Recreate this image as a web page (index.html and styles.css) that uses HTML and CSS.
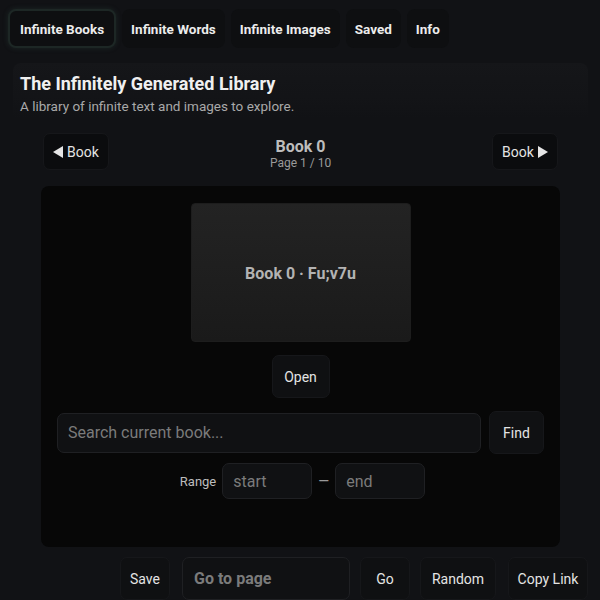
FILE: index.html
```html
<!DOCTYPE html>
<html lang="en">
<head>
<meta charset="utf-8">
<title>The Infinitely Generated Library</title>
<link rel="stylesheet" href="styles.css">
</head>
<body>
  <nav class="tabs">
    <button class="tab active">Infinite Books</button>
    <button class="tab">Infinite Words</button>
    <button class="tab">Infinite Images</button>
    <button class="tab">Saved</button>
    <button class="tab">Info</button>
  </nav>

  <main class="library">
    <header class="intro">
      <h1 class="title">The Infinitely Generated Library</h1>
      <p class="subtitle">A library of infinite text and images to explore.</p>
    </header>

    <section class="reader">
      <div class="book-nav">
        <button class="btn nav-btn">
          <svg class="tri" viewBox="0 0 10 12" width="10" height="12"><path d="M10 0 L10 12 L0 6 Z" fill="#e6e6e6"/></svg>
          Book
        </button>
        <div class="book-id">
          <div class="book-name">Book 0</div>
          <div class="book-page">Page 1 / 10</div>
        </div>
        <button class="btn nav-btn">
          Book
          <svg class="tri" viewBox="0 0 10 12" width="10" height="12"><path d="M0 0 L0 12 L10 6 Z" fill="#e6e6e6"/></svg>
        </button>
      </div>

      <div class="shelf">
        <div class="cover">Book 0 · Fu;v7u</div>
        <button class="btn open-btn">Open</button>

        <div class="search-row">
          <input class="field search" type="text" placeholder="Search current book...">
          <button class="btn find-btn">Find</button>
        </div>

        <div class="range-row">
          <span class="range-label">Range</span>
          <input class="field range" type="text" placeholder="start">
          <span class="dash">—</span>
          <input class="field range" type="text" placeholder="end">
        </div>
      </div>
    </section>

    <div class="actions">
      <button class="btn act save">Save</button>
      <input class="field goto" type="text" placeholder="Go to page">
      <button class="btn act go">Go</button>
      <button class="btn act random">Random</button>
      <button class="btn act copy">Copy Link</button>
    </div>
  </main>
</body>
</html>
```

FILE: styles.css
```css
* {
  box-sizing: border-box;
}

html, body {
  height: 100%;
}

body {
  margin: 0;
  padding: 9px 8px 0;
  background: #111215;
  color: #e8e8e8;
  font-family: Roboto, "Liberation Sans", sans-serif;
  overflow: hidden;
}

button, input {
  font-family: inherit;
}

/* top tab bar */
.tabs {
  display: flex;
  gap: 6px;
}

.tab {
  height: 39px;
  padding: 0 9px;
  border: 0;
  border-radius: 8px;
  background: #0e0f11;
  color: #ececec;
  font-size: 13.5px;
  font-weight: 700;
}

.tab.active {
  padding: 0 10px;
  border: 2px solid #1d2725;
  box-shadow: 0 0 4px 1px rgba(40, 60, 55, 0.35);
}

/* main library panel */
.library {
  margin: 15px 4px 0 5px;
}

.intro {
  padding: 10px 7px 4px;
  border-radius: 8px 8px 0 0;
  background: linear-gradient(#151619, #131417 60%, #111215);
}

.title {
  margin: 0;
  font-size: 18px;
  line-height: 22px;
  font-weight: 700;
  color: #f0f0f0;
}

.subtitle {
  margin: 3px 0 0;
  font-size: 13.5px;
  line-height: 17px;
  color: #a9a9a9;
}

.reader {
  width: 519px;
  margin: 0 auto;
}

.btn {
  border: 1px solid #16171a;
  border-radius: 7px;
  background: #0d0e10;
  color: #e4e4e4;
  font-size: 14px;
  padding: 0 11px;
}

.book-nav {
  margin: 14px 2px 0;
  display: flex;
  align-items: center;
  justify-content: space-between;
}

.nav-btn {
  height: 37px;
  width: 66px;
  display: flex;
  align-items: center;
  justify-content: center;
  gap: 4px;
  padding: 0;
  background: #0b0c0e;
}

.tri {
  display: block;
}

.book-id {
  text-align: center;
  padding-top: 4px;
}

.book-name {
  font-size: 16px;
  line-height: 18px;
  font-weight: 700;
  color: #bdbdbd;
}

.book-page {
  font-size: 12px;
  line-height: 14px;
  color: #9a9a9a;
}

/* book display */
.shelf {
  margin-top: 16px;
  padding: 17px 16px 48px;
  border-radius: 8px;
  background: #070707;
  display: flex;
  flex-direction: column;
  align-items: center;
}

.cover {
  width: 220px;
  height: 139px;
  border-radius: 4px;
  background: linear-gradient(#232323, #1a1a1a);
  border: 1px solid #1d1d1d;
  display: flex;
  align-items: center;
  justify-content: center;
  font-size: 16px;
  font-weight: 700;
  color: #b3b3b3;
  padding-top: 2px;
}

.open-btn {
  margin-top: 13px;
  height: 43px;
  width: 58px;
  padding: 0;
  background: #0f1012;
}

.field {
  border: 1px solid #1f2023;
  border-radius: 7px;
  background: #101113;
  color: #ddd;
  font-size: 16px;
  padding: 0 10px;
  outline: none;
}

.field::placeholder {
  color: #7b7b7b;
}

.search-row {
  margin-top: 13px;
  align-self: stretch;
  display: flex;
  align-items: center;
  gap: 8px;
}

.search {
  flex: 1;
  height: 40px;
}

.find-btn {
  height: 43px;
  width: 55px;
  padding: 0;
  background: #101113;
}

.range-row {
  margin-top: 9px;
  display: flex;
  align-items: center;
  gap: 6px;
  padding-left: 4px;
}

.range-label {
  font-size: 13px;
  color: #bdbdbd;
}

.range {
  width: 90px;
  height: 36px;
}

.dash {
  color: #9a9a9a;
  font-size: 14px;
}

/* bottom action bar */
.actions {
  margin-top: 10px;
  display: flex;
  justify-content: flex-end;
  gap: 10px;
}

.act {
  height: 43px;
  background: #0f1012;
  padding: 0;
}

.save { width: 50px; margin-right: 2px; }
.go { width: 50px; }
.random { width: 76px; margin-right: 2px; }
.copy { width: 80px; }

.goto {
  width: 168px;
  height: 43px;
  font-weight: 700;
  padding: 0 11px;
}
```
